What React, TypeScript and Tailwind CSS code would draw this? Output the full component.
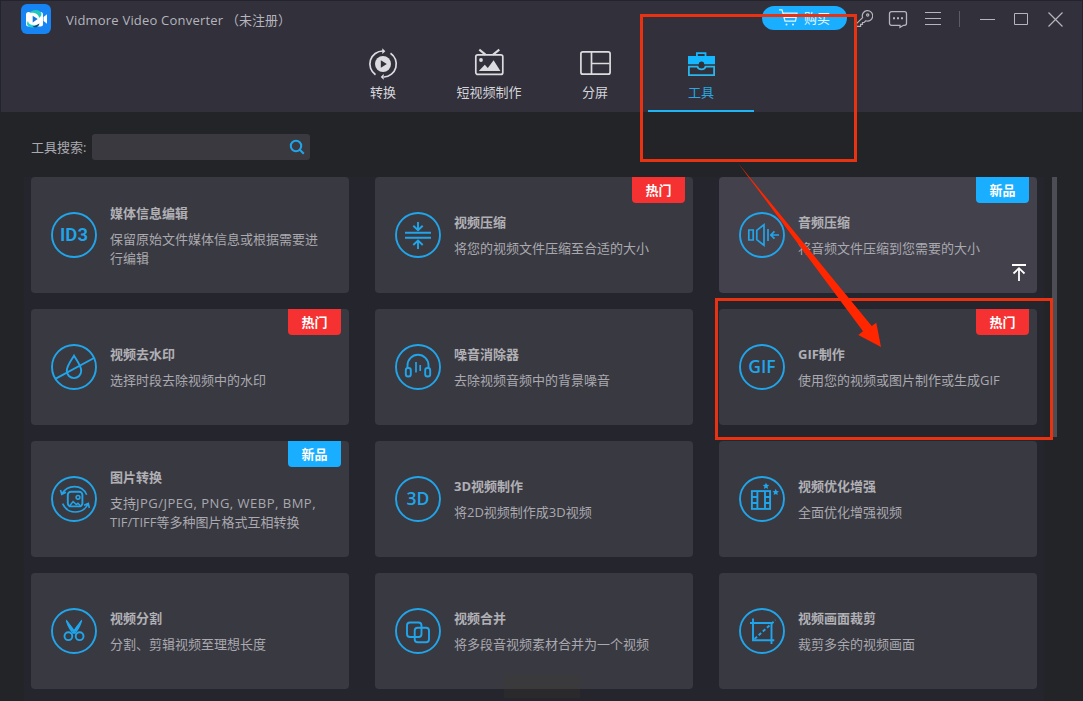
import type { ReactNode } from "react";

type Tool = {
  title: string;
  description: ReactNode;
  icon: ReactNode;
  badge?: "hot" | "new";
  active?: boolean;
};

function TextIcon({ label, className = "" }: { label: string; className?: string }) {
  return (
    <text
      x="23"
      y="29.3"
      textAnchor="middle"
      className={`fill-[#21a5ea] ${className}`}
      stroke="none"
    >
      {label}
    </text>
  );
}

function RoundIcon({ children }: { children: ReactNode }) {
  return (
    <svg width="46" height="46" viewBox="0 0 46 46" fill="none" stroke="#21a5ea" strokeWidth="1.9" className="shrink-0">
      <circle cx="23" cy="23" r="22" />
      {children}
    </svg>
  );
}

const tools: Tool[] = [
  {
    title: "媒体信息编辑",
    description: "保留原始文件媒体信息或根据需要进\n行编辑",
    icon: <TextIcon label="ID3" className="font-[Roboto,sans-serif] text-[18.5px] font-semibold" />
  },
  {
    title: "视频压缩",
    description: "将您的视频文件压缩至合适的大小",
    badge: "hot",
    icon: (
      <>
        <path d="M10 20.8h26M10 25.8h26" />
        <path d="M23 10v8M18.3 13.8l4.7 4.5 4.7-4.5M23 37v-8M18.3 33l4.7-4.5 4.7 4.5" />
      </>
    )
  },
  {
    title: "音频压缩",
    description: "将音频文件压缩到您需要的大小",
    badge: "new",
    active: true,
    icon: (
      <>
        <path d="M9.8 18h4.4v10H9.8zM17.8 18.3l7.2-5.6v20.6l-7.2-5.6zM29 17v12" strokeWidth="1.7" />
        <path d="M40 23h-8M35.5 19.3L31.8 23l3.7 3.7" strokeWidth="1.7" />
      </>
    )
  },
  {
    title: "视频去水印",
    description: "选择时段去除视频中的水印",
    badge: "hot",
    icon: (
      <>
        <path d="M23 11.7c-3.3 5.500-7.200 10-7.200 15.200a7.200 7.200 0 0 0 14.400 0c0-5.200-3.900-9.700-7.200-15.200z" />
        <path d="M4.3 34.800L43 14" />
      </>
    )
  },
  {
    title: "噪音消除器",
    description: "去除视频音频中的背景噪音",
    icon: (
      <>
        <path d="M12.5 24v-2.700a10.500 10.500 0 0 1 21 0V24" />
        <rect x="10.800" y="24" width="5" height="8.500" rx="2.300" />
        <rect x="30.200" y="24" width="5" height="8.500" rx="2.300" />
        <path d="M21 18v10.500M25.200 21v6" strokeWidth="1.7" />
      </>
    )
  },
  {
    title: "GIF制作",
    description: "使用您的视频或图片制作或生成GIF",
    badge: "hot",
    icon: <TextIcon label="GIF" className="text-[17.5px] font-semibold" />
  },
  {
    title: "图片转换",
    description: (
      <>
        支持<span className="tracking-[0.5px]">JPG/JPEG, PNG, WEBP, BMP,</span>
        {"\n"}TIF/TIFF等多种图片格式互相转换
      </>
    ),
    badge: "new",
    icon: (
      <>
        <rect x="16.800" y="15.800" width="14.600" height="14.600" rx="3.200" />
        <circle cx="27" cy="21.300" r="1.900" strokeWidth="1.5" />
        <path d="M18.500 30l3.600-4.500 3.200 3 1.600-1.200 2.500 2.500" strokeWidth="1.5" />
        <path d="M9.500 14l1.300 4.300 4.200-2M10.800 18c5.500-9.500 20-10.500 24.900.8M38.300 32l-1-4.600-4.200 1.800M37.200 28c-5.500 10.500-20.500 11-25.600-.3" strokeWidth="1.6" />
      </>
    )
  },
  {
    title: "3D视频制作",
    description: "将2D视频制作成3D视频",
    icon: <TextIcon label="3D" className="text-[17.5px] font-semibold" />
  },
  {
    title: "视频优化增强",
    description: "全面优化增强视频",
    icon: (
      <>
        <rect x="12.900" y="15.100" width="18.200" height="17.800" />
        <path d="M18.400 15v18M26 15v18M13 21h5.400M13 27h5.400M26 21h5M26 27h5" />
        <path
          d="M27 6.700l1 2 2.300.3-1.700 1.600.4 2.300-2-1.100-2 1.100.4-2.300L23.700 9l2.300-.3zM36.700 12.800l1 2.100 2.300.3-1.700 1.600.4 2.300-2-1.100-2 1.100.4-2.300-1.700-1.600 2.300-.3z"
          fill="#21a5ea"
          stroke="none"
        />
      </>
    )
  },
  {
    title: "视频分割",
    description: "分割、剪辑视频至理想长度",
    icon: (
      <>
        <circle cx="17.400" cy="28.200" r="3.900" />
        <circle cx="28.600" cy="28.200" r="3.900" />
        <path d="M14.800 11.300c.5 5 2.500 8.500 5.200 12.300l2 2.600 2.500-2.500c-2.500-4-6.300-8-9.700-12.400zM31.200 11.300c-.5 5-2.500 8.500-5.200 12.300l-2 2.600-2.500-2.500c2.500-4 6.300-8 9.700-12.400z" fill="#21a5ea" stroke="none" />
        <path d="M15.300 12.500L24 25M30.700 12.500L22 25" strokeWidth="1.4" />
      </>
    )
  },
  {
    title: "视频合并",
    description: "将多段音视频素材合并为一个视频",
    icon: (
      <>
        <rect x="12" y="14.500" width="14.500" height="14.500" rx="3" />
        <rect x="19.700" y="19.700" width="14.300" height="14.500" rx="3" />
      </>
    )
  },
  {
    title: "视频画面裁剪",
    description: "裁剪多余的视频画面",
    icon: (
      <>
        <path d="M14 10.500v21.700h21.300M11 15h21.500v21" />
        <path d="M15.500 31L36.500 12" strokeDasharray="3.400 2.200" />
      </>
    )
  }
];

const tabs = [
  {
    label: "转换",
    icon: (
      <>
        <circle cx="16" cy="16" r="8" fill="#dcdce0" stroke="none" />
        <path d="M13.800 12.200l6 3.800-6 3.800z" fill="#31303b" stroke="none" />
        <path d="M8.500 26.700A13 13 0 0 1 16 3M23.500 5.200A13 13 0 0 1 17 29" strokeWidth="1.7" />
        <path d="M15.300.3l3 2.900-3 2.800zM16.700 26l-3 2.900 3 2.800z" fill="#dcdce0" stroke="none" />
      </>
    )
  },
  {
    label: "短视频制作",
    icon: (
      <>
        <rect x="2.800" y="6.800" width="27" height="19.600" rx="2" strokeWidth="1.7" />
        <path d="M6.300 1.600l6.200 5M26.300 1.600l-6.200 5" />
        <circle cx="8" cy="12" r="1.900" fill="#dcdce0" stroke="none" />
        <path d="M5.800 23l6-6.300 3 3.300 5.800-7.700 6.800 10.700z" fill="#dcdce0" stroke="none" />
      </>
    )
  },
  {
    label: "分屏",
    icon: (
      <>
        <rect x="1.900" y="3.800" width="29.200" height="22.400" rx="2" strokeWidth="1.7" />
        <path d="M12.500 4v22M12.500 15.500h18" strokeWidth="1.7" />
      </>
    )
  },
  {
    label: "工具",
    active: true,
    icon: (
      <>
        <path d="M11.900 9V5.100h8.600V9" stroke="#15b8ff" strokeWidth="1.8" />
        <path d="M3 8h27v8.300h-10.800a2.700 2.700 0 0 0-5.400 0H3z" fill="#15b8ff" stroke="none" />
        <path d="M3.900 18.700h8.600c.3 1.900 1.500 2.700 4 2.700s3.700-.8 4-2.700h8.600v8.400H3.900z" stroke="#2bb5ea" strokeWidth="1.8" />
      </>
    )
  }
];

function Logo() {
  return (
    <svg width="30" height="30" viewBox="0 0 30 30">
      <rect width="30" height="30" rx="6" fill="#1684f2" />
      <rect x="5" y="8" width="17" height="14.500" rx="2.500" fill="#fff" />
      <path d="M22.500 13l3.500-2.700v9.400L22.500 17z" fill="#fff" />
      <path d="M8 9c3.500-4 10.500-4.200 12.400.3.500 2.300-.8 3.200-2.400 4.700.2-3.800-4.700-6.300-10-5z" fill="#20c9bd" />
      <path d="M7 17c.5 3.300 3.800 4.800 8.500 4.300-1.500 3.200-8 2.700-9.200-.3-.5-1.800-.1-3 .7-4z" fill="#20d1ce" />
      <path d="M11.500 22.500c3 1.700 6.500.4 7-3l-4 2z" fill="#064b70" />
      <path d="M11.700 11.700l5 3.300-5 3.400z" fill="#1475dc" />
    </svg>
  );
}

function TitleBar() {
  return (
    <div className="flex h-9 items-start pl-5">
      <div className="mt-[3px]">
        <Logo />
      </div>
      <div className="ml-[15px] mt-[9px] flex text-[13px] leading-5 text-[#b5b5bb]">
        <span className="w-[160px] whitespace-nowrap tracking-[0.2px]">Vidmore Video Converter</span>
        <span className="whitespace-nowrap">（未注册）</span>
      </div>
      <div className="ml-auto flex items-start">
        <button className="mt-[5px] flex h-6 w-[85px] items-center rounded-full bg-[#19aeff] pl-[17px] text-[13px] leading-none text-[#e3f6ff]">
          <svg width="19" height="18" viewBox="0 0 19 18" fill="none" stroke="currentColor" strokeWidth="1.2">
            <path d="M0 .8h3l3 11.400h10.500l1.500-8H4M5 8.500h12" />
            <circle cx="7.500" cy="15.500" r="1" fill="currentColor" stroke="none" />
            <circle cx="14" cy="15.500" r="1" fill="currentColor" stroke="none" />
          </svg>
          <span className="ml-[6px]">购买</span>
        </button>
        <svg className="ml-2 mt-[9px]" width="18" height="18" viewBox="0 0 18 18" fill="none" stroke="#b5b5bb" strokeWidth="1.2">
          <path d="M7.600 7.600a5.200 5.200 0 1 1 3.300 3.200l-1.800 1.700H7.500v1.900H5.600v1.900H1.500v-2.600z" />
          <circle cx="12.700" cy="5" r="1.100" />
        </svg>
        <svg className="ml-[15px] mt-[9px]" width="20" height="19" viewBox="0 0 20 19" fill="none" stroke="#b5b5bb" strokeWidth="1.3">
          <path d="M3.500 1.700h13a2 2 0 0 1 2 2v9.600a2 2 0 0 1-2 2h-1l-3.500 2v-2H3.500a2 2 0 0 1-2-2V3.700a2 2 0 0 1 2-2z" />
          <path d="M5 8.300h2M9 8.300h2M13 8.300h2" strokeWidth="2" />
        </svg>
        <svg className="ml-[17px] mt-[9px]" width="16" height="18" fill="none" stroke="#b5b5bb">
          <path d="M0 2.500h16M0 8.500h16M0 14.500h16" />
        </svg>
        <div className="ml-[18px] mt-[10px] h-4 w-px bg-[#5c5c66]" />
        <svg className="ml-5 mt-[9px]" width="15" height="18" fill="none" stroke="#b5b5bb">
          <path d="M0 9.500h15" />
        </svg>
        <svg className="ml-[19px] mt-[9px]" width="14" height="18" fill="none" stroke="#b5b5bb">
          <path d="M.5 3.500h13v11H.5z" />
        </svg>
        <svg className="ml-5 mr-[19px] mt-[9px]" width="15" height="18" fill="none" stroke="#b5b5bb" strokeWidth="1.2">
          <path d="M.5 2.500l14 14M14.500 2.500l-14 14" />
        </svg>
      </div>
    </div>
  );
}

function ToolCard({ tool }: { tool: Tool }) {
  return (
    <div
      className={`relative flex h-[116px] items-center rounded pl-5 ${tool.active ? "bg-[#42414c]" : "bg-[#393941]"}`}
    >
      <RoundIcon>{tool.icon}</RoundIcon>
      <div className="ml-[13px] pt-px text-[13px] leading-[19px] text-[#a9a9af]">
        <h3 className="mb-[7px] font-bold text-[#b0b0b5]">{tool.title}</h3>
        <p className="whitespace-pre">{tool.description}</p>
      </div>
      {tool.badge && (
        <span
          className={`absolute right-2 top-0 flex h-[26px] w-[53px] items-center justify-center rounded-b pt-[2px] text-[13px] font-bold text-white ${
            tool.badge === "hot" ? "bg-[#f53131]" : "bg-[#19aeff]"
          }`}
        >
          {tool.badge === "hot" ? "热门" : "新品"}
        </span>
      )}
      {tool.active && (
        <svg className="absolute bottom-3 right-[11px]" width="14" height="17" fill="none" stroke="#fff" strokeWidth="1.8">
          <path d="M0 1h14M7 17V4.500M1.500 9.500L7 4.200l5.500 5.300" />
        </svg>
      )}
    </div>
  );
}

export default function App() {
  return (
    <div className="relative flex h-[701px] w-[1083px] flex-col overflow-hidden bg-[#232428] font-['Open_Sans','Noto_Sans_CJK_SC',sans-serif]">
      <header className="h-28 shrink-0 border-l border-r border-t border-[#22232c] bg-[#31303b]">
        <TitleBar />
        <nav className="flex h-[75px] pl-[329px]">
          {tabs.map((tab) => (
            <div
              key={tab.label}
              className={`flex w-[106px] flex-col items-center border-b-2 pt-[11px] text-[13px] leading-5 ${
                tab.active ? "border-[#1eb4f5] text-[#2aa7e2]" : "border-transparent text-[#d5d5d9]"
              }`}
            >
              <svg width="32" height="32" viewBox="0 0 32 32" fill="none" stroke="#dcdce0" strokeWidth="2">
                {tab.icon}
              </svg>
              <span className="mt-[2px]">{tab.label}</span>
            </div>
          ))}
        </nav>
      </header>

      {/* Search */}
      <div className="flex h-[65px] shrink-0 items-start pl-[31px] pt-[22px]">
        <label className="w-[61px] whitespace-nowrap text-[13px] leading-[26px] text-[#a9a9af]">工具搜索:</label>
        <div className="flex h-[26px] w-[218px] items-center justify-end rounded-[3px] bg-[#3a393f] pr-[5px]">
          <svg width="16" height="16" viewBox="0 0 16 16" fill="none" stroke="#21a5ea" strokeWidth="2">
            <circle cx="7" cy="7" r="5.200" />
            <path d="M10.800 10.800l4 4" />
          </svg>
        </div>
      </div>

      {/* Tool list */}
      <main className="flex items-start pl-6">
        <div className="grid w-[1020px] grid-cols-[318px_318px_318px] gap-x-[26px] gap-y-4 bg-[#25252d] pb-3 pl-[7px]">
          {tools.map((tool) => (
            <ToolCard key={tool.title} tool={tool} />
          ))}
        </div>
        <div className="ml-2 h-[260px] w-[5px] bg-[#4d4d55]" />
      </main>

      <div className="absolute left-[504px] top-[675px] h-[23px] w-[76px] bg-[#40422c]/20" />

      {/* Annotations */}
      <div className="absolute left-[640px] top-[14px] h-[148px] w-[217px] border-[3px] border-[#e83212]" />
      <div className="absolute left-[715px] top-[298px] h-[142px] w-[338px] border-[3px] border-[#e83212]" />
      <svg className="absolute left-[730px] top-[155px]" width="160" height="200" viewBox="730 155 160 200">
        <path d="M738 163L871.700 326l4.600-3.300L881 347l-22.700-12 4.700-3.700z" fill="#ff2600" />
      </svg>
    </div>
  );
}
